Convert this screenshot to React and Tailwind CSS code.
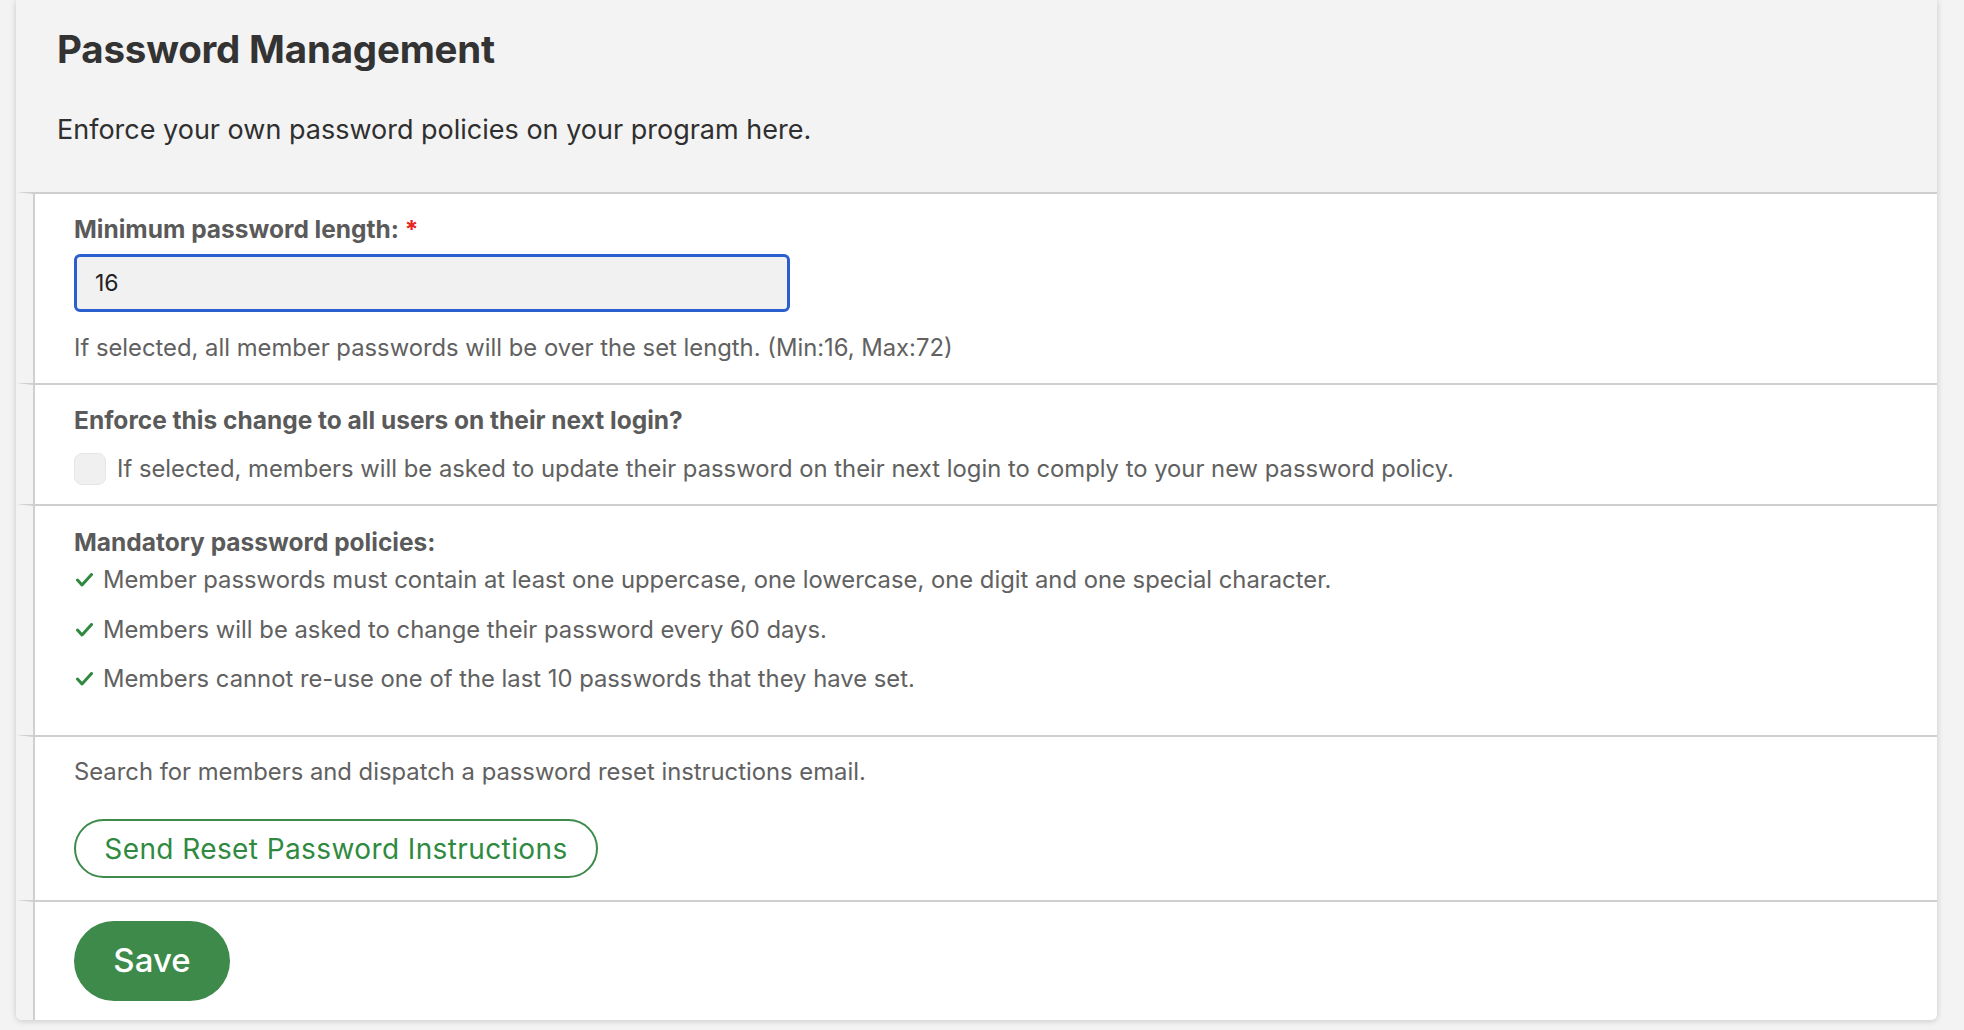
import React, { useState } from 'react';

const policies = [
    'Member passwords must contain at least one uppercase, one lowercase, one digit and one special character.',
    'Members will be asked to change their password every 60 days.',
    'Members cannot re-use one of the last 10 passwords that they have set.',
];

const Section = ({ children, className = '' }) => (
    <div className="border-t-2 border-l-[17px] border-t-[#cfcfcf] border-l-[#f3f3f3]">
        <div className={`border-l-2 border-[#cfcfcf] bg-white pl-[39px] ${className}`}>
            {children}
        </div>
    </div>
);

const Check = () => (
    <svg width="17" height="14" viewBox="0 0 17 14" className="ml-[2px] mr-[10px] shrink-0">
        <path d="M1.5 7 L6 12 L15.5 1.5" fill="none" stroke="#2f8a3f" strokeWidth="3" strokeLinecap="round" strokeLinejoin="round" />
    </svg>
);

const App = () => {
    const [minLength, setMinLength] = useState('16');
    const [enforce, setEnforce] = useState(false);

    return (
        <div className="min-h-screen bg-[#f3f3f3] pl-[16px] font-['Inter','Liberation_Sans',sans-serif]">
            <div className="w-[1921px] rounded-b-md bg-[#f3f3f3] shadow-[0_1px_6px_rgba(0,0,0,0.18)] overflow-hidden">
                <div className="pl-[41px] pt-[25px] pb-[44px]">
                    <h1 className="text-[38.5px] leading-[48px] font-bold text-[#333] tracking-[-0.2px]">Password Management</h1>
                    <p className="mt-[39px] text-[27px] leading-[36px] text-[#2f2f2f]">Enforce your own password policies on your program here.</p>
                </div>

                <Section className="pt-[20px] pb-[20px]">
                    <label className="block text-[24.5px] leading-[30px] font-bold text-[#5a5a5a]">
                        Minimum password length: <span className="text-[#e8261f]">*</span>
                    </label>
                    <input
                        value={minLength}
                        onChange={(e) => setMinLength(e.target.value)}
                        className="mt-[10px] block w-[716px] h-[58px] rounded-[6px] border-[3px] border-[#2b5fcf] bg-[#f1f1f1] px-[18px] text-[23px] text-[#222] outline-none"
                    />
                    <p className="mt-[21px] text-[23.8px] leading-[30px] text-[#616161]">
                        If selected, all member passwords will be over the set length. (Min:16, Max:72)
                    </p>
                </Section>

                <Section className="pt-[20px] pb-[19px]">
                    <p className="text-[24.5px] leading-[30px] font-bold text-[#5a5a5a]">Enforce this change to all users on their next login?</p>
                    <label className="mt-[18px] flex items-center gap-[11px] cursor-pointer">
                        <button
                            type="button"
                            onClick={() => setEnforce(!enforce)}
                            className="w-[32px] h-[32px] rounded-[8px] border border-[#e6e6e6] bg-[#f0f0f0] flex items-center justify-center"
                        >
                            {enforce && <Check />}
                        </button>
                        <span className="text-[23.8px] leading-[30px] text-[#616161]">
                            If selected, members will be asked to update their password on their next login to comply to your new password policy.
                        </span>
                    </label>
                </Section>

                <Section className="pt-[21px] pb-[41px]">
                    <p className="text-[24.5px] leading-[30px] font-bold text-[#5a5a5a]">Mandatory password policies:</p>
                    <ul className="mt-[8px] flex flex-col gap-[19.5px]">
                        {policies.map((item) => (
                            <li key={item} className="flex items-center text-[23.8px] leading-[30px] text-[#616161]">
                                <Check />
                                {item}
                            </li>
                        ))}
                    </ul>
                </Section>

                <Section className="pt-[20px] pb-[22px]">
                    <p className="text-[23.8px] leading-[30px] text-[#616161]">Search for members and dispatch a password reset instructions email.</p>
                    <button className="mt-[32px] h-[59px] w-[524px] rounded-full border-2 border-[#3d8a4a] bg-white text-[28px] text-[#2f8a3f] tracking-[0.4px]">
                        Send Reset Password Instructions
                    </button>
                </Section>

                <Section className="pt-[19px] pb-[19px]">
                    <button className="h-[80px] w-[156px] rounded-full bg-[#3d8a4a] text-[33px] font-medium text-white">
                        Save
                    </button>
                </Section>
            </div>
        </div>
    );
};

export default App;
